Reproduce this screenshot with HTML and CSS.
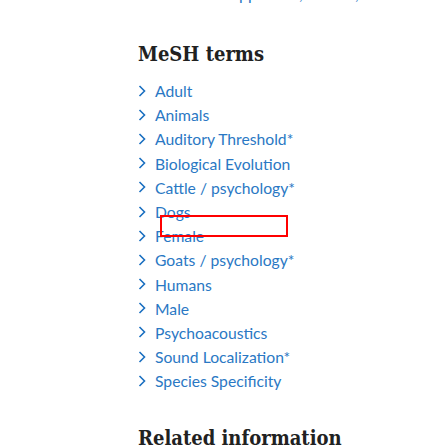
FILE: index.html
```html
<!DOCTYPE html>
<html>
<head>
<meta charset="utf-8">
<link rel="stylesheet" href="styles.css">
</head>
<body>
<div class="page">
  <div class="prev-line"><span class="frag f1">pp</span><span class="frag f2">,</span><span class="frag f3">,</span></div>
  <section class="mesh">
    <h2 class="title">MeSH terms</h2>
    <ul class="terms">
      <li><svg class="chev" viewBox="0 0 8 12"><polyline points="1.5,1 6.5,6 1.5,11"/></svg><span class="link">Adult</span></li>
      <li><svg class="chev" viewBox="0 0 8 12"><polyline points="1.5,1 6.5,6 1.5,11"/></svg><span class="link">Animals</span></li>
      <li><svg class="chev" viewBox="0 0 8 12"><polyline points="1.5,1 6.5,6 1.5,11"/></svg><span class="link">Auditory Threshold*</span></li>
      <li><svg class="chev" viewBox="0 0 8 12"><polyline points="1.5,1 6.5,6 1.5,11"/></svg><span class="link">Biological Evolution</span></li>
      <li><svg class="chev" viewBox="0 0 8 12"><polyline points="1.5,1 6.5,6 1.5,11"/></svg><span class="link">Cattle / psychology*</span></li>
      <li><svg class="chev" viewBox="0 0 8 12"><polyline points="1.5,1 6.5,6 1.5,11"/></svg><span class="link">Dogs</span></li>
      <li><svg class="chev" viewBox="0 0 8 12"><polyline points="1.5,1 6.5,6 1.5,11"/></svg><span class="link">Female</span></li>
      <li><svg class="chev" viewBox="0 0 8 12"><polyline points="1.5,1 6.5,6 1.5,11"/></svg><span class="link">Goats / psychology*</span></li>
      <li><svg class="chev" viewBox="0 0 8 12"><polyline points="1.5,1 6.5,6 1.5,11"/></svg><span class="link">Humans</span></li>
      <li><svg class="chev" viewBox="0 0 8 12"><polyline points="1.5,1 6.5,6 1.5,11"/></svg><span class="link">Male</span></li>
      <li><svg class="chev" viewBox="0 0 8 12"><polyline points="1.5,1 6.5,6 1.5,11"/></svg><span class="link">Psychoacoustics</span></li>
      <li><svg class="chev" viewBox="0 0 8 12"><polyline points="1.5,1 6.5,6 1.5,11"/></svg><span class="link">Sound Localization*</span></li>
      <li><svg class="chev" viewBox="0 0 8 12"><polyline points="1.5,1 6.5,6 1.5,11"/></svg><span class="link">Species Specificity</span></li>
    </ul>
    <div class="highlight"></div>
  </section>
  <h2 class="title related">Related information</h2>
</div>
</body>
</html>
```
FILE: styles.css
```css
html, body { margin: 0; padding: 0; background: #fff; }
.page { padding-left: 138px; width: 300px; }
.prev-line { height: 20px; position: relative; overflow: hidden; }
.frag { position: absolute; top: -14px; color: #2a78c4; font-family: Lato, sans-serif; font-size: 16px; line-height: 16px; }
.f1 { left: 101px; }
.f2 { left: 161px; }
.f3 { left: 217px; }
.mesh { position: relative; }
.title {
  font-family: "DejaVu Serif Condensed", "DejaVu Serif", serif;
  font-weight: bold;
  font-size: 20px;
  color: #212121;
  margin: 21px 0 0 0;
  line-height: 26px;
}
.terms {
  list-style: none;
  margin: 12px 0 0 0;
  padding: 0;
  display: grid;
  grid-auto-rows: 24.2px;
}
.terms li {
  font-family: Lato, "Open Sans", sans-serif;
  font-size: 15.7px;
  line-height: 24px;
  color: #2a78c4;
  display: flex;
  align-items: center;
  gap: 9px;
}
.chev { width: 8px; height: 12px; fill: none; stroke: #1a6fc0; stroke-width: 1.6; flex: none; margin-top: -1px; }
.link { color: #2a78c4; }
.highlight {
  position: absolute;
  left: 22px; top: 174px;
  width: 124px; height: 18px;
  border: 2px solid #ff0000;
}
.related { margin-top: 32px; }
```
